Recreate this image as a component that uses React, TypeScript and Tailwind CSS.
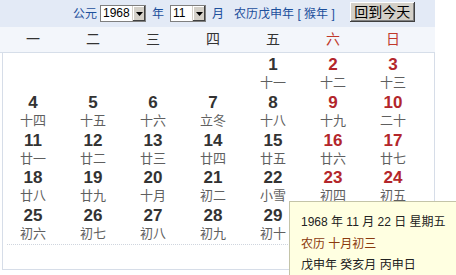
import React from 'react';

type Day = { d: number; l: string } | null;

const rows: Day[][] = [
  [null, null, null, null, { d: 1, l: '十一' }, { d: 2, l: '十二' }, { d: 3, l: '十三' }],
  [{ d: 4, l: '十四' }, { d: 5, l: '十五' }, { d: 6, l: '十六' }, { d: 7, l: '立冬' }, { d: 8, l: '十八' }, { d: 9, l: '十九' }, { d: 10, l: '二十' }],
  [{ d: 11, l: '廿一' }, { d: 12, l: '廿二' }, { d: 13, l: '廿三' }, { d: 14, l: '廿四' }, { d: 15, l: '廿五' }, { d: 16, l: '廿六' }, { d: 17, l: '廿七' }],
  [{ d: 18, l: '廿八' }, { d: 19, l: '廿九' }, { d: 20, l: '十月' }, { d: 21, l: '初二' }, { d: 22, l: '小雪' }, { d: 23, l: '初四' }, { d: 24, l: '初五' }],
  // 30 sits under the tooltip
  [{ d: 25, l: '初六' }, { d: 26, l: '初七' }, { d: 27, l: '初八' }, { d: 28, l: '初九' }, { d: 29, l: '初十' }, null, null],
];

const weekdays = ['一', '二', '三', '四', '五', '六', '日'];

const Select: React.FC<{ value: string; className?: string }> = ({ value, className }) => (
  <div className={`flex h-[17px] items-stretch border border-[#7f7f7f] bg-white ${className ?? ''}`}>
    <span className="flex-1 pl-[2px] text-[12px] leading-[15px] text-black">{value}</span>
    <span className="flex w-[13px] items-center justify-center border-l border-[#d4d0c8] bg-[#d4d0c8] shadow-[inset_-1px_-1px_0_#404040,inset_1px_1px_0_#ffffff]">
      <svg width="7" height="4" viewBox="0 0 7 4">
        <path d="M0 0h7L3.5 4z" fill="#000" />
      </svg>
    </span>
  </div>
);

export default function App() {
  return (
    <div className="relative h-[275px] w-[456px] overflow-hidden bg-white font-['Liberation_Sans','Noto_Sans_CJK_SC',sans-serif]">
      <div className="w-[435px]">
        {/* top bar */}
        <div className="flex h-[27px] items-center bg-[#e3eaf6] pl-[73px] text-[12px] text-[#1d4f9c]">
          <span>公元</span>
          <Select value="1968" className="ml-[3px] w-[46px]" />
          <span className="ml-[6px]">年</span>
          <Select value="11" className="ml-[6px] w-[36px]" />
          <span className="ml-[6px]">月</span>
          <span className="ml-[10px]">农历戊申年 [ 猴年 ]</span>
          <button className="ml-[15px] mb-[3px] h-[20px] w-[65px] bg-[#d4d0c8] text-[14px] leading-[18px] text-black shadow-[inset_-1px_-1px_0_#404040,inset_1px_1px_0_#ffffff,inset_-2px_-2px_0_#808080]">
            回到今天
          </button>
        </div>
        {/* weekday row */}
        <div className="grid h-[26px] grid-cols-[repeat(7,60px)] items-center border-b border-[#d6dee9] bg-[#f3f6fb] pl-[3px] text-[14px]">
          {weekdays.map((w, i) => (
            <div key={w} className={`text-center ${i >= 5 ? 'text-[#c0392b]' : 'text-[#333]'}`}>
              {w}
            </div>
          ))}
        </div>
        {/* days */}
        <div className="ml-[2px] h-[217px] w-[433px] border-x border-b border-[#d6dde8]">
          {rows.map((r, ri) => (
            <div key={ri} className="grid h-[37.75px] grid-cols-[repeat(7,60px)]">
              {r.map((c, ci) => (
                <div key={ci} className="flex flex-col items-center pt-[3px]">
                  {c && (
                    <>
                      <span className={`text-[17px] font-bold leading-[18px] ${ci >= 5 ? 'text-[#b3262b]' : 'text-[#333]'}`}>{c.d}</span>
                      <span className="text-[13px] leading-[17px] text-[#5f5f5f]">{c.l}</span>
                    </>
                  )}
                </div>
              ))}
            </div>
          ))}
          <div className="mx-[4px] mt-[2px] border-t border-dotted border-[#cfd5de]" />
        </div>
      </div>
      {/* tooltip */}
      <div className="absolute left-[289px] top-[201px] h-[90px] w-[190px] border border-[#c4c4a8] bg-[#ffffe1] pl-[11px] pt-[10px] text-[12px] leading-[21.5px]">
        <div className="text-[#222]">1968 年 11 月 22 日 星期五</div>
        <div className="text-[#8b3a0e]">农历 十月初三</div>
        <div className="text-[#222]">戊申年 癸亥月 丙申日</div>
      </div>
    </div>
  );
}
